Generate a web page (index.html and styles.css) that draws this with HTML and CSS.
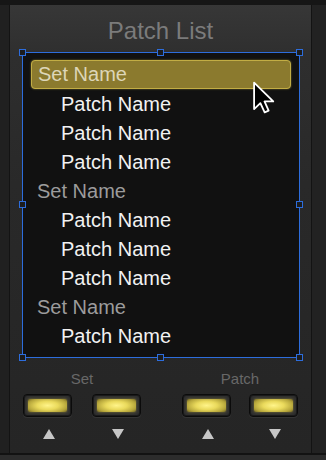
FILE: index.html
```html
<!DOCTYPE html>
<html lang="en">

<head>
    <meta charset="UTF-8">
    <meta name="viewport" content="width=device-width, initial-scale=1.0">
    <title>Patch List</title>
    <link rel="stylesheet" href="styles.css">
</head>

<body>
    <div class="frame">
        <div class="side side-left"></div>
        <div class="panel">
            <h1 class="title">Patch List</h1>

            <div class="list">
                <div class="row set selected">Set Name</div>
                <div class="row patch">Patch Name</div>
                <div class="row patch">Patch Name</div>
                <div class="row patch">Patch Name</div>
                <div class="row set">Set Name</div>
                <div class="row patch">Patch Name</div>
                <div class="row patch">Patch Name</div>
                <div class="row patch">Patch Name</div>
                <div class="row set">Set Name</div>
                <div class="row patch">Patch Name</div>

                <!-- selection handles -->
                <span class="handle h-tl"></span>
                <span class="handle h-tm"></span>
                <span class="handle h-tr"></span>
                <span class="handle h-ml"></span>
                <span class="handle h-mr"></span>
                <span class="handle h-bl"></span>
                <span class="handle h-bm"></span>
                <span class="handle h-br"></span>

                <svg class="cursor" width="24" height="33" viewBox="-1 -1 14 20">
                    <path d="M0 0 L0 16 L3.8 12.4 L6.4 18 L8.8 17 L6.3 11.4 L11.6 11.4 Z" fill="#000" stroke="#fff" stroke-width="1.1" stroke-linejoin="round" />
                </svg>
            </div>

            <div class="controls">
                <div class="group group-set">
                    <div class="label">Set</div>
                    <div class="buttons">
                        <div class="btn"><span class="lamp"></span></div>
                        <div class="btn"><span class="lamp"></span></div>
                    </div>
                    <div class="arrows">
                        <span class="arrow"><svg width="12" height="10" viewBox="0 0 12 10"><path d="M6 0 L12 10 L0 10 Z" /></svg></span>
                        <span class="arrow"><svg width="12" height="10" viewBox="0 0 12 10"><path d="M0 0 L12 0 L6 10 Z" /></svg></span>
                    </div>
                </div>
                <div class="group group-patch">
                    <div class="label">Patch</div>
                    <div class="buttons">
                        <div class="btn"><span class="lamp"></span></div>
                        <div class="btn"><span class="lamp"></span></div>
                    </div>
                    <div class="arrows">
                        <span class="arrow"><svg width="12" height="10" viewBox="0 0 12 10"><path d="M6 0 L12 10 L0 10 Z" /></svg></span>
                        <span class="arrow"><svg width="12" height="10" viewBox="0 0 12 10"><path d="M0 0 L12 0 L6 10 Z" /></svg></span>
                    </div>
                </div>
            </div>
        </div>
        <div class="side side-right"></div>
    </div>
</body>

</html>
```

FILE: styles.css
```css
* {
    padding: 0;
    margin: 0;
    box-sizing: border-box;
}

body {
    background-color: #2c2c2c;
    font-family: "Liberation Sans", Arial, sans-serif;
    width: 326px;
    height: 460px;
    overflow: hidden;
}

.frame {
    display: flex;
    height: 455px;
    padding-top: 5px;
    border-bottom: 2px solid #121212;
    background: #161616;
}

.side {
    height: 100%;
    background: #202020;
}

.side-left {
    width: 10px;
    border-right: 1px solid #131313;
}

.side-right {
    width: 15px;
    border-left: 1px solid #131313;
    background: #222222;
}

.panel {
    width: 301px;
    padding-top: 12px;
    background: linear-gradient(#373737, #2e2e2e 12%, #292929 40%, #252525);
}

.title {
    font-size: 24px;
    line-height: 28px;
    font-weight: normal;
    color: #7b7b7b;
    text-align: center;
}

.list {
    position: relative;
    margin: 7px 0 0 12px;
    width: 278px;
    height: 306px;
    padding-top: 8px;
    background: #111111;
    border: 1px solid #2d6ddc;
}

.row {
    font-size: 20px;
    line-height: 29px;
    height: 29px;
    white-space: nowrap;
}

.set {
    color: #9c9c9c;
    padding-left: 14px;
}

.patch {
    color: #f2f2f2;
    padding-left: 38px;
}

.selected {
    margin: -1px 8px 1px;
    padding-left: 6px;
    line-height: 27px;
    height: 29px;
    color: #ddd6b8;
    background: #8b7a2e;
    border: 1px solid #c2ad44;
    border-radius: 4px;
    box-shadow: 0 0 2px rgba(210, 190, 70, 0.6);
}

.handle {
    position: absolute;
    width: 7px;
    height: 7px;
    border: 1px solid #2d6ddc;
    background: #1c1c1c;
}

.h-tl { left: -4px; top: -4px; }
.h-tm { left: 134px; top: -4px; }
.h-tr { right: -4px; top: -4px; }
.h-ml { left: -4px; top: 148px; }
.h-mr { right: -4px; top: 148px; }
.h-bl { left: -4px; bottom: -4px; }
.h-bm { left: 134px; bottom: -4px; }
.h-br { right: -4px; bottom: -4px; }

.cursor {
    position: absolute;
    left: 229px;
    top: 28px;
}

.controls {
    display: flex;
    gap: 41px;
    margin-top: 12px;
    padding-left: 13px;
}

.group {
    display: flex;
    flex-direction: column;
    align-items: center;
}

.label {
    font-size: 15px;
    line-height: 18px;
    color: #686868;
}

.buttons,
.arrows {
    display: flex;
    gap: 20px;
}

.buttons {
    margin-top: 6px;
}

.group-patch .buttons,
.group-patch .arrows {
    gap: 18px;
}

.btn {
    width: 49px;
    height: 23px;
    padding: 4px;
    background: #2e2e2e;
    border: 1px solid #0b0b0b;
    border-radius: 4px;
    box-shadow: inset 0 0 0 1px #1a1a1a, 0 1px 0 #333;
}

.lamp {
    display: block;
    height: 13px;
    border-radius: 2px;
    background: radial-gradient(ellipse 60% 70% at center, #fff48a, #eada5c 45%, #b4a43a 85%, #8a7c2c);
    box-shadow: 0 0 3px rgba(230, 210, 80, 0.5);
}

.arrows {
    margin-top: 12px;
}

.arrow {
    display: flex;
    justify-content: center;
    width: 49px;
    padding-left: 2px;
}

.arrow svg {
    display: block;
    fill: #c6c6c6;
}
```
